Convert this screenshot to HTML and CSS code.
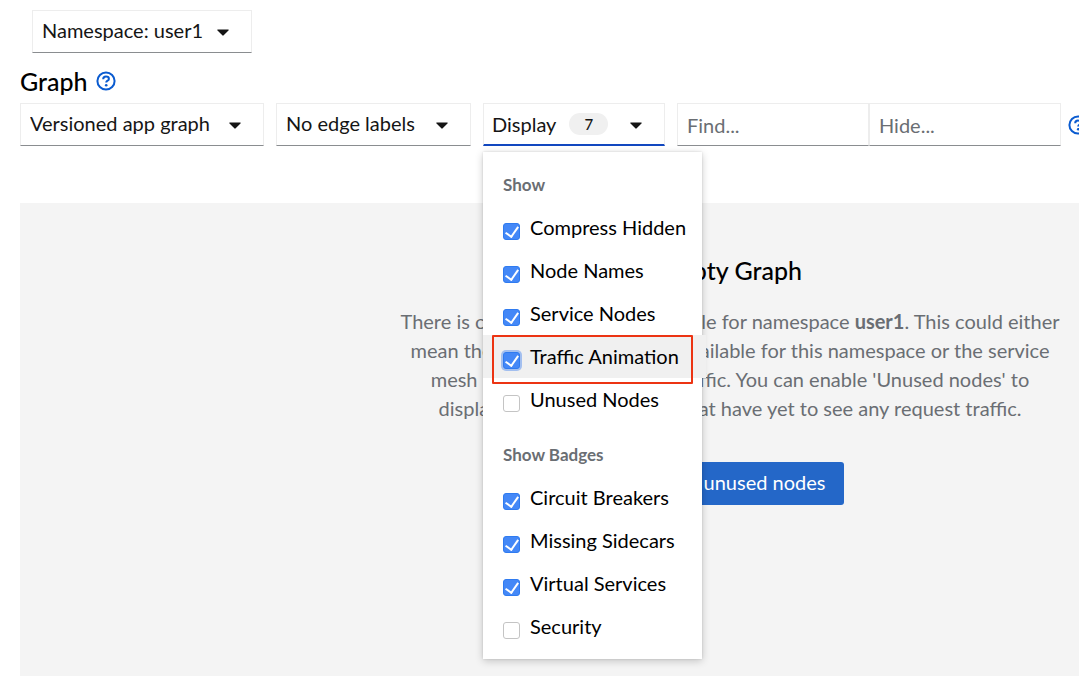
FILE: index.html
```html
<!DOCTYPE html>
<html lang="en">
<head>
<meta charset="utf-8">
<title>Graph</title>
<link rel="stylesheet" href="styles.css">
</head>
<body>
<svg class="sprite" aria-hidden="true">
  <symbol id="help" viewBox="0 0 20 20">
    <circle cx="10" cy="10" r="8.6" fill="none" stroke="currentColor" stroke-width="2"/>
    <path d="M7.200 8.200C7.200 6.500 8.400 5.600 10 5.600c1.700 0 2.900.9 2.900 2.300 0 1.900-2.700 1.700-2.700 3.600" fill="none" stroke="currentColor" stroke-width="2"/>
    <circle cx="10.200" cy="14.200" r="1.300" fill="currentColor"/>
  </symbol>
  <symbol id="caret" viewBox="0 0 12 7">
    <path d="M1 .5h10c.7 0 .9.6.5 1L6.700 6.300a1 1 0 0 1-1.400 0L.5 1.500C.1 1.100.3.5 1 .5z" fill="currentColor"/>
  </symbol>
</svg>
<header class="namespace-bar">
  <div class="picker picker-namespace">
    <select aria-label="Namespace"><option>Namespace: user1</option></select>
    <svg class="caret"><use href="#caret"/></svg>
  </div>
</header>
<main class="page">
  <div class="title">
    <h1>Graph</h1>
    <button class="help" type="button" aria-label="Graph help"><svg><use href="#help"/></svg></button>
  </div>
  <div class="toolbar">
    <div class="picker picker-type">
      <select aria-label="Graph type"><option>Versioned app graph</option></select>
      <svg class="caret"><use href="#caret"/></svg>
    </div>
    <div class="picker picker-edges">
      <select aria-label="Edge labels"><option>No edge labels</option></select>
      <svg class="caret"><use href="#caret"/></svg>
    </div>
    <div class="picker picker-display">
      <button class="toggle" type="button" aria-expanded="true">Display <span class="badge">7</span></button>
      <svg class="caret"><use href="#caret"/></svg>
      <div class="menu">
        <fieldset>
          <legend>Show</legend>
          <label class="item"><input type="checkbox" checked><span>Compress Hidden</span></label>
          <label class="item"><input type="checkbox" checked><span>Node Names</span></label>
          <label class="item"><input type="checkbox" checked><span>Service Nodes</span></label>
          <label class="item active"><input type="checkbox" checked><span>Traffic Animation</span></label>
          <label class="item"><input type="checkbox"><span>Unused Nodes</span></label>
        </fieldset>
        <fieldset>
          <legend>Show Badges</legend>
          <label class="item"><input type="checkbox" checked><span>Circuit Breakers</span></label>
          <label class="item"><input type="checkbox" checked><span>Missing Sidecars</span></label>
          <label class="item"><input type="checkbox" checked><span>Virtual Services</span></label>
          <label class="item"><input type="checkbox"><span>Security</span></label>
        </fieldset>
      </div>
    </div>
    <div class="search">
      <input type="text" aria-label="Find" placeholder="Find...">
      <input type="text" aria-label="Hide" placeholder="Hide...">
    </div>
    <button class="help" type="button" aria-label="Find and hide help"><svg><use href="#help"/></svg></button>
  </div>
  <section class="canvas">
    <div class="empty">
      <h2>Empty Graph</h2>
      <p>There is currently no graph available for namespace <strong>user1</strong>. This could either<br>
      mean there is no service mesh available for this namespace or the service<br>
      mesh has yet to see service traffic. You can enable 'Unused nodes' to<br>
      display service mesh nodes that have yet to see any request traffic.</p>
      <button class="primary" type="button">Display unused nodes</button>
    </div>
  </section>
</main>
</body>
</html>
```
FILE: styles.css
```css
* {
  box-sizing: border-box;
}

body {
  margin: 0;
  min-height: 100vh;
  display: flex;
  flex-direction: column;
  overflow: hidden;
  background: #fff;
  color: #151515;
  font-family: Lato, "Open Sans", sans-serif;
  font-size: 20px;
}

button, select, input {
  margin: 0;
  font: inherit;
  color: inherit;
}

.sprite {
  position: absolute;
  width: 0;
  height: 0;
}

.namespace-bar {
  display: flex;
  padding: 10px 32px 0;
}

.page {
  flex: 1;
  display: flex;
  flex-direction: column;
  padding-left: 20px;
}

.title {
  display: flex;
  align-items: center;
  gap: 8px;
  height: 50px;
  padding-top: 6px;
}

h1, h2 {
  margin: 0;
  font-size: 25px;
  line-height: 29px;
  font-weight: 500;
  color: #000;
}

.help {
  flex: none;
  display: flex;
  padding: 0;
  border: 0;
  background: none;
  color: #0a5bd0;
}

.help svg {
  width: 20px;
  height: 20px;
}

.toolbar {
  display: flex;
  align-items: center;
  gap: 12px;
}

.picker {
  position: relative;
  flex: none;
  display: flex;
  height: 43px;
  border: 1px solid #ededed;
  border-bottom-color: #8a8d90;
}

.picker-namespace { width: 220px; }
.picker-type { width: 244px; }
.picker-edges { width: 195px; }
.picker-display { width: 182px; border-bottom: 2px solid #1147bf; }

.picker select,
.toggle {
  appearance: none;
  flex: 1;
  padding: 0 9px 3px;
  border: 0;
  background: transparent;
  text-align: left;
}

.picker .toggle {
  padding: 0 8px 1px;
}

.caret {
  position: absolute;
  right: 22px;
  top: 18px;
  width: 12px;
  height: 7px;
  pointer-events: none;
}

.toggle {
  display: flex;
  align-items: center;
  gap: 13px;
}

.badge {
  padding: 0 15px;
  border-radius: 11px;
  background: #f0f0f0;
  font-size: 15px;
  line-height: 22px;
  font-weight: 500;
}

.search {
  flex: none;
  display: flex;
}

.search input {
  width: 192px;
  height: 43px;
  padding: 0 9px;
  border: 1px solid #ededed;
  border-bottom-color: #8a8d90;
  background: #fff;
}

.search input::placeholder {
  color: #6a6e73;
}

.search + .help {
  margin-left: -5px;
}

.menu {
  position: absolute;
  z-index: 1;
  top: 48px;
  left: -1px;
  width: 219px;
  padding: 11px 0;
  background: #fff;
  box-shadow: 0 2px 8px rgba(0, 0, 0, .2), 0 0 2px rgba(0, 0, 0, .12);
}

fieldset {
  margin: 0;
  padding: 0;
  border: 0;
}

fieldset + fieldset {
  margin-top: 12px;
}

legend {
  padding: 0 20px;
  font-size: 17px;
  font-weight: 700;
  line-height: 43px;
  color: #6a6e73;
}

.item {
  position: relative;
  display: flex;
  align-items: center;
  gap: 10px;
  height: 43px;
  padding: 0 20px;
  white-space: nowrap;
  color: #000;
}

.item input {
  appearance: none;
  flex: none;
  display: grid;
  place-items: center;
  width: 17px;
  height: 17px;
  margin-top: 8px;
  border: 1px solid #c4c4c4;
  border-radius: 3px;
  background: #fff;
}

.item input:checked {
  border-color: #2f7bf0;
  background: #4488f7;
}

.item input:checked::after {
  content: "";
  width: 6px;
  height: 11px;
  margin-bottom: 2px;
  border: solid #fff;
  border-width: 0 2px 2px 0;
  transform: rotate(35deg);
}

.active {
  background: #f0f0f0;
}

.active input {
  box-shadow: 0 0 0 2px #a3bfef;
}

.active::after {
  content: "";
  position: absolute;
  inset: 0 13px -6px 9px;
  border: 2px solid #ec3413;
  border-radius: 1px;
}

.item span {
  line-height: 43px;
}

.canvas {
  flex: 1;
  margin-top: 57px;
  padding: 53px 0 0 361px;
  background: #f4f4f4;
}

.empty {
  display: flex;
  flex-direction: column;
  align-items: center;
  text-align: center;
  white-space: nowrap;
}

.empty p {
  margin: 22px 0 39px;
  line-height: 29px;
  color: #6a6e73;
}

.primary {
  height: 43px;
  padding: 0 19px 3px;
  border: 0;
  border-radius: 3px;
  background: #2467c8;
  color: #fff;
}
```
